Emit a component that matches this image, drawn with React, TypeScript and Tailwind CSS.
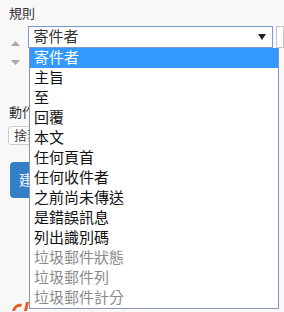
import React from "react";

const options = [
  { label: "寄件者", active: true },
  { label: "主旨" },
  { label: "至" },
  { label: "回覆" },
  { label: "本文" },
  { label: "任何頁首" },
  { label: "任何收件者" },
  { label: "之前尚未傳送" },
  { label: "是錯誤訊息" },
  { label: "列出識別碼" },
  { label: "垃圾郵件狀態", disabled: true },
  { label: "垃圾郵件列", disabled: true },
  { label: "垃圾郵件計分", disabled: true },
];

export default function App() {
  return (
    <div
      className="relative w-[284px] h-[312px] overflow-hidden bg-[#f8f8f8] text-[#333]"
      style={{ fontFamily: '"Liberation Sans", "Noto Sans CJK TC", sans-serif' }}
    >
      <div className="pl-[9px] pt-[5px] text-[13px] leading-[17px]">規則</div>

      <div className="flex items-start mt-[4px]">
        <div className="w-[29px] flex flex-col items-center pl-[3px] pt-[15px] gap-[14px]">
          <svg width="9" height="5" viewBox="0 0 9 5">
            <path d="M0 5 L4.5 0 L9 5 Z" fill="#a8a8a8" />
          </svg>
          <svg width="9" height="5" viewBox="0 0 9 5">
            <path d="M0 0 L4.5 5 L9 0 Z" fill="#a8a8a8" />
          </svg>
        </div>
        <div className="w-[250px] h-[22px] bg-white border border-[#7b9bd0] flex items-center justify-between pl-[4px] pr-[6px] text-[15px]">
          <span>寄件者</span>
          <svg width="8" height="6" viewBox="0 0 8 6">
            <path d="M0 0 L8 0 L4 6 Z" fill="#222" />
          </svg>
        </div>
        <div className="ml-[3px] w-[8px] h-[22px] bg-white border border-[#c8c8c8]" />
      </div>

      <div className="pl-[9px] mt-[39px] text-[13px] leading-[17px]">動作</div>
      <div className="ml-[8px] mt-[5px] w-[200px] h-[19px] bg-white border border-[#ccc] rounded-[3px] pl-[5px] text-[13px] leading-[17px]">
        捨棄
      </div>
      <div className="ml-[10px] mt-[17px] w-[80px] h-[36px] rounded-[4px] bg-[#3480c8] text-white text-[14px] flex items-center pl-[9px]">
        建立
      </div>

      <div className="ml-[10px] mt-[103px]">
        <svg width="22" height="10" viewBox="0 0 22 10">
          <path d="M2 10 C4 4 8 2 12 3 L11 6 C8 5 6 7 5 10 Z" fill="#e85a1e" />
          <path d="M14 10 L16 1 L19 1 L17 10 Z" fill="#e85a1e" />
        </svg>
      </div>

      <div className="absolute left-[29px] top-[48px] w-[250px] bg-white border border-[#8794b4] border-t-0 text-[15px]">
        {options.map((o) => (
          <div
            key={o.label}
            className={
              o.active
                ? "h-[20px] leading-[20px] pl-[4px] bg-[#3399ff] text-white"
                : o.disabled
                ? "h-[20px] leading-[20px] pl-[4px] text-[#8a8a8a]"
                : "h-[20px] leading-[20px] pl-[4px] text-[#111]"
            }
          >
            {o.label}
          </div>
        ))}
      </div>
    </div>
  );
}
